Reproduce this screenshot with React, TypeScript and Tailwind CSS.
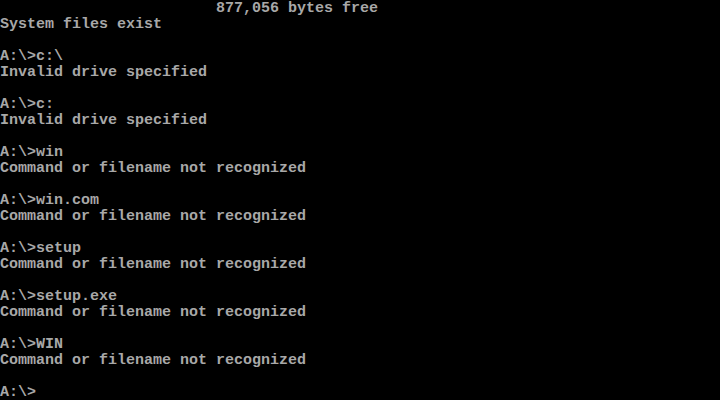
const lines = [
  "                        877,056 bytes free",
  "System files exist",
  "",
  "A:\\>c:\\",
  "Invalid drive specified",
  "",
  "A:\\>c:",
  "Invalid drive specified",
  "",
  "A:\\>win",
  "Command or filename not recognized",
  "",
  "A:\\>win.com",
  "Command or filename not recognized",
  "",
  "A:\\>setup",
  "Command or filename not recognized",
  "",
  "A:\\>setup.exe",
  "Command or filename not recognized",
  "",
  "A:\\>WIN",
  "Command or filename not recognized",
  "",
  "A:\\>",
];

export default function App() {
  return (
    <div className="h-[400px] w-[720px] overflow-hidden bg-black pt-px">
      <pre className="m-0 font-['Liberation_Mono',monospace] text-[15px] font-bold leading-[16px] text-[#a8a8a8]">
        {lines.map((line, i) => (
          <div key={i} className="h-4 whitespace-pre">
            {line}
          </div>
        ))}
      </pre>
    </div>
  );
}
